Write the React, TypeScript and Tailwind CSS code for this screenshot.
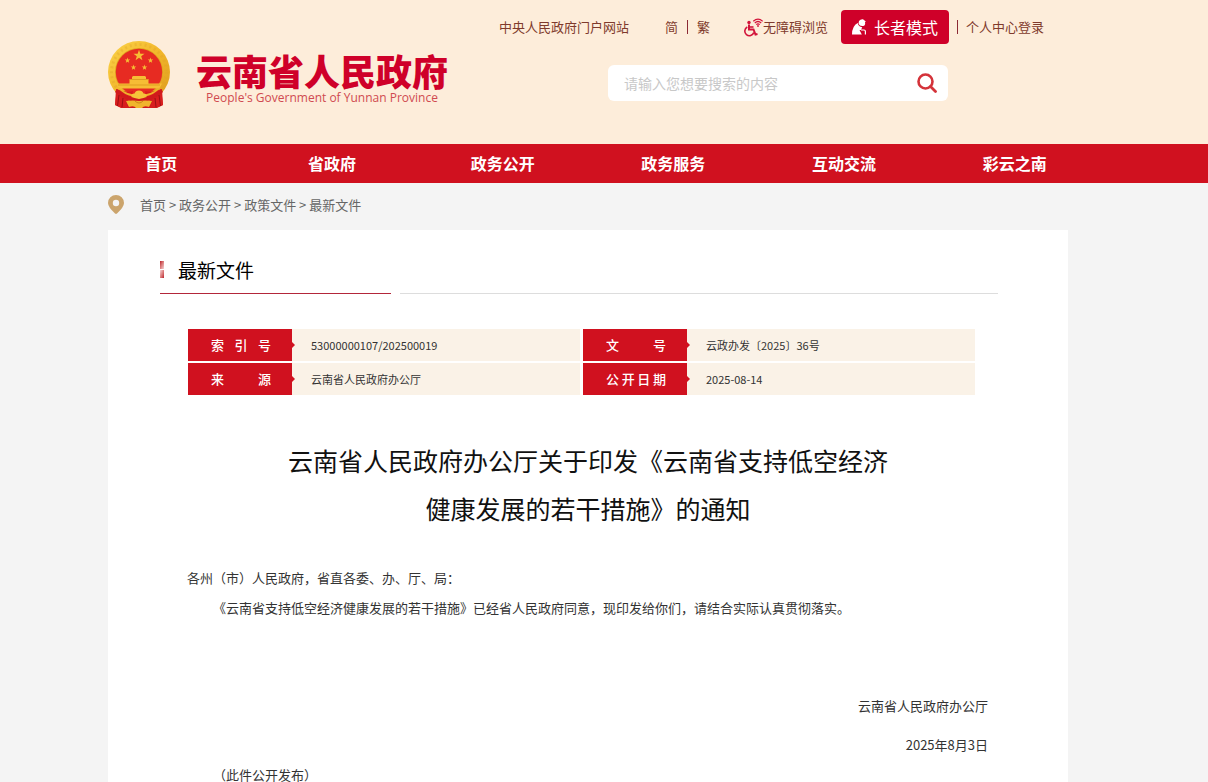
import { useState } from "react";
import type { ReactNode } from "react";

const NAV_ITEMS = ["首页", "省政府", "政务公开", "政务服务", "互动交流", "彩云之南"];

const BREADCRUMB = ["首页", "政务公开", "政策文件", "最新文件"];

const META_ROWS = [
  [
    { label: "索引号", value: "53000000107/202500019" },
    { label: "文号", value: "云政办发〔2025〕36号" },
  ],
  [
    { label: "来源", value: "云南省人民政府办公厅" },
    { label: "公开日期", value: "2025-08-14" },
  ],
];

const STAR = "0,-10 2.3,-3.2 9.5,-3.1 3.8,1.2 5.9,8.1 0,4 -5.9,8.1 -3.8,1.2 -9.5,-3.1 -2.3,-3.2";

function Container({ children, className = "" }: { children: ReactNode; className?: string }) {
  return (
    <div className="pr-8">
      <div className={`mx-auto max-w-[960px] ${className}`}>{children}</div>
    </div>
  );
}

function Emblem() {
  return (
    <svg viewBox="0 0 62 68" className="h-[68px] w-[62px] shrink-0" aria-hidden="true">
      <defs>
        <linearGradient id="gold" x1="0" y1="0" x2="1" y2="1">
          <stop offset="0" stopColor="#fbd44a" />
          <stop offset="0.5" stopColor="#f2b72b" />
          <stop offset="1" stopColor="#dc9a1c" />
        </linearGradient>
      </defs>
      <path d="M9 47 L7 64 L13 67 H49 L55 64 L53 47 Z" fill="#cf1a1c" />
      <circle cx="31" cy="31" r="31" fill="url(#gold)" />
      <circle cx="31" cy="31" r="27.500" fill="none" stroke="#dfa024" strokeWidth="3" strokeDasharray="2 3" opacity="0.35" />
      <circle cx="31" cy="31" r="24" fill="#e0a11f" />
      <circle cx="31" cy="31" r="23.200" fill="#e72b22" />
      <g fill="#f6bd35">
        <polygon points={STAR} transform="translate(31 14.500) scale(.58)" />
        <polygon points={STAR} transform="translate(19.500 19.500) scale(.29)" />
        <polygon points={STAR} transform="translate(42.500 19.500) scale(.29)" />
        <polygon points={STAR} transform="translate(25.500 26.500) scale(.29)" />
        <polygon points={STAR} transform="translate(36.500 26.500) scale(.29)" />
        <path d="M24 36 L25 35 H37 L38 36 V38 H40.500 V42.500 H54 L51.500 47.500 H10.500 L8 42.500 H21.500 V38 H24 Z" />
      </g>
      <path d="M22 38.500 H40 M10 44 H52" stroke="#d68f18" strokeWidth="0.700" />
      <path d="M8 48 Q18 52 25 50 L23 58 L18 61 L20 67 L12 66 L7 64 Z" fill="#d81e1e" />
      <path d="M54 48 Q44 52 37 50 L39 58 L44 61 L42 67 L50 66 L55 64 Z" fill="#d81e1e" />
      <path d="M9 48 Q18 57 31 57 Q44 57 53 48 L55 51 Q45 61 31 61 Q17 61 7 51 Z" fill="#d01a1c" />
      <path d="M11 54 L9.500 65 M15 57 L14 66 M47 57 L48 66 M51 54 L52.500 65" stroke="#9c0f14" strokeWidth="1" />
      <path d="M10 46 Q19 54 31 54 Q43 54 52 46 L49 50 Q42 56 31 56 Q20 56 13 50 Z" fill="#efb32b" />
      <path d="M23 55 Q24 52 26.500 52.500 Q27.500 49.500 31 49.500 Q34.500 49.500 35.500 52.500 Q38 52 39 55 Q35 58 31 58 Q27 58 23 55 Z" fill="#f6c43a" />
      <path d="M18 60 Q25 59 31 60 Q37 59 44 60 L41 66 Q36 64 34 67 H28 Q26 64 21 66 Z" fill="#f0b52c" />
      <path d="M27 60 Q31 64 35 60" fill="none" stroke="#c47a14" strokeWidth="0.800" />
    </svg>
  );
}

function AccessibleIcon() {
  return (
    <svg viewBox="0 0 19 19" className="h-[19px] w-[19px]" fill="none" stroke="#d2143a" aria-hidden="true">
      <circle cx="5" cy="4.500" r="1.700" fill="#d2143a" stroke="none" />
      <path d="M5 6.500 V11.500 H9.500 L11.500 16.500 L13.500 16" strokeWidth="2" />
      <path d="M5.500 9 H9.500" strokeWidth="1.600" />
      <path d="M3.300 9 A4.600 4.600 0 1 0 9.800 14.500" strokeWidth="1.600" />
      <path d="M9.300 3.200 Q14 -1 18.700 3.200 M10.800 5 Q14 2 17.200 5 M12.300 6.600 Q14 5 15.700 6.600" strokeWidth="1.200" />
      <circle cx="14" cy="8" r="0.900" fill="#d2143a" stroke="none" />
    </svg>
  );
}

function ElderIcon() {
  return (
    <svg viewBox="0 0 14 16" className="h-4 w-[14px]" fill="#fff" aria-hidden="true">
      <path d="M7 2 Q8.500 0 11 0.300 L13.800 2.600 L13 3.200 Q13.800 6.500 11 7 Q7.500 7.500 6.500 4.500 Z" />
      <path d="M0 15.500 Q0 7 5.700 4 Q6.500 8 10.200 8.200 L9 11 H7.500 L9.800 15.500 Z" />
      <path d="M9 11 H12 Q13.400 11 13.400 12.500 V15.500" fill="none" stroke="#fff" strokeWidth="1.200" />
    </svg>
  );
}

function SearchBox() {
  const [keyword, setKeyword] = useState("");

  return (
    <form
      className="flex h-9 w-[340px] items-center rounded-md bg-white pr-[11px] pb-px pl-4"
      onSubmit={(e) => e.preventDefault()}
    >
      <input
        type="text"
        aria-label="搜索"
        value={keyword}
        onChange={(e) => setKeyword(e.target.value)}
        placeholder="请输入您想要搜索的内容"
        className="min-w-0 flex-1 text-sm text-[#333] outline-none placeholder:text-[#c8c8c8]"
      />
      <button type="submit" aria-label="搜索">
        <svg viewBox="0 0 20 20" className="h-5 w-5" fill="none" stroke="#d4333a" aria-hidden="true">
          <circle cx="8.500" cy="8.500" r="7" strokeWidth="2.600" />
          <path d="M13.500 13.500 L18.500 18.500" strokeWidth="2.800" strokeLinecap="round" />
        </svg>
      </button>
    </form>
  );
}

function Header() {
  return (
    <header className="bg-[#fdedda]">
      <Container className="flex h-36 justify-between pr-6">
        <a href="#" className="flex items-start gap-[26px] pt-[41px]">
          <Emblem />
          <span className="flex flex-col items-center pt-[9px] text-[#cf0029]">
            <span className="text-[36px] leading-10 font-black whitespace-nowrap">云南省人民政府</span>
            <span className="font-['Open_Sans','Noto_Sans',sans-serif] text-xs leading-4 text-[#d04a50]">
              People's Government of Yunnan Province
            </span>
          </span>
        </a>

        <div className="pt-[10px] text-[13px] text-[#7f3a2c]">
          <div className="flex h-[34px] items-center whitespace-nowrap">
            <a href="#" className="mr-9">中央人民政府门户网站</a>
            <a href="#">简</a>
            <span className="mx-[9px] h-[14px] w-px bg-[#8c2a35]" />
            <a href="#" className="mr-[34px]">繁</a>
            <a href="#" className="mr-[13px] flex items-center">
              <AccessibleIcon />
              无障碍浏览
            </a>
            <button
              type="button"
              className="flex h-[34px] w-[108px] items-center justify-center gap-2 rounded bg-[#cf0029] pb-px text-base text-white"
            >
              <ElderIcon />
              长者模式
            </button>
            <span className="mx-2 h-[14px] w-px bg-[#8c2a35]" />
            <a href="#">个人中心登录</a>
          </div>
          <div className="mt-[21px] mr-[96px] flex justify-end">
            <SearchBox />
          </div>
        </div>
      </Container>
    </header>
  );
}

function MainNav() {
  return (
    <nav className="bg-[#d0111f] pr-8">
      <ul className="mx-auto grid h-[39px] max-w-[1024px] grid-cols-6 items-center pb-[2px] text-center text-base font-bold text-white">
        {NAV_ITEMS.map((item) => (
          <li key={item}>
            <a href="#">{item}</a>
          </li>
        ))}
      </ul>
    </nav>
  );
}

function Breadcrumb() {
  return (
    <Container className="flex h-[47px] items-center pb-1">
      <svg viewBox="0 0 16 19" className="h-[19px] w-4" aria-hidden="true">
        <path
          fill="#cba46c"
          fillRule="evenodd"
          d="M8 0 A8 8 0 0 1 16 8 Q16 12 9 18.500 Q8 19.300 7 18.500 Q0 12 0 8 A8 8 0 0 1 8 0 Z M8 4.800 A3.200 3.200 0 1 0 8 11.200 A3.200 3.200 0 1 0 8 4.800 Z"
        />
      </svg>
      <p className="ml-4 text-[13px] text-[#666]">
        {BREADCRUMB.map((item, i) => (
          <span key={item}>
            {i > 0 && " > "}
            <a href="#">{item}</a>
          </span>
        ))}
      </p>
    </Container>
  );
}

function MetaTable() {
  return (
    <table className="w-full table-fixed border-separate border-spacing-x-0 border-spacing-y-[2px]">
      <colgroup>
        <col className="w-[104px]" />
        <col />
        <col className="w-[107px]" />
        <col />
      </colgroup>
      <tbody>
        {META_ROWS.map((row) => (
          <tr key={row[0].label} className="h-8">
            {row.map((cell, i) => [
              <th
                key={cell.label}
                scope="row"
                className={`relative bg-[#d0111f] p-0 text-[13px] font-medium text-white ${
                  i > 0 ? "border-l-[3px] border-white" : ""
                }`}
              >
                <span className="ml-[23px] block w-[60px] [text-align-last:justify]">{cell.label}</span>
                <svg viewBox="0 0 3 6" className="absolute top-[13px] left-full h-[6px] w-[3px]" aria-hidden="true">
                  <path d="M0 0 L3 3 L0 6 Z" fill="#d0111f" />
                </svg>
              </th>,
              <td key={`${cell.label}-value`} className="bg-[#faf2e7] p-0 pl-[19px] text-[11px] text-[#333]">
                {cell.value}
              </td>,
            ])}
          </tr>
        ))}
      </tbody>
    </table>
  );
}

export default function App() {
  return (
    <div className="min-h-screen bg-[#f4f4f4] font-['Noto_Sans_CJK_SC','Noto_Sans',sans-serif]">
      <Header />
      <MainNav />
      <Breadcrumb />

      <Container>
        <main className="bg-white pt-[25px] pr-[70px] pl-[52px]">
          {/* section title */}
          <div className="flex gap-[9px]">
            <div className="flex h-[39px] w-[231px] items-start gap-[14px] border-b border-[#b3263a]">
              <span className="mt-[6px] flex flex-col gap-px">
                <span className="h-2 w-1 bg-linear-to-br from-[#b8142c] to-[#f3d5d9]" />
                <span className="h-2 w-1 bg-linear-to-br from-[#f3d5d9] to-[#b8142c]" />
              </span>
              <h2 className="text-[19px] leading-[30px]">最新文件</h2>
            </div>
            <div className="flex-1 border-b border-[#ddd]" />
          </div>

          <div className="mt-[33px] mr-[23px] ml-7">
            <MetaTable />
          </div>

          <h1 className="mt-[39px] ml-[18px] text-center text-[25px] leading-[48px] text-[#111]">
            云南省人民政府办公厅关于印发《云南省支持低空经济
            <br />
            健康发展的若干措施》的通知
          </h1>

          <article className="mt-[31px] mr-[10px] ml-[27px] text-[13px] leading-[30px] text-[#333]">
            <p>各州（市）人民政府，省直各委、办、厅、局：</p>
            <p className="indent-[26px]">
              《云南省支持低空经济健康发展的若干措施》已经省人民政府同意，现印发给你们，请结合实际认真贯彻落实。
            </p>
            <p className="mt-[68px] text-right">云南省人民政府办公厅</p>
            <p className="mt-[9px] text-right">2025年8月3日</p>
            <p className="mt-2 indent-[26px] leading-[14px]">（此件公开发布）</p>
          </article>
        </main>
      </Container>
    </div>
  );
}
